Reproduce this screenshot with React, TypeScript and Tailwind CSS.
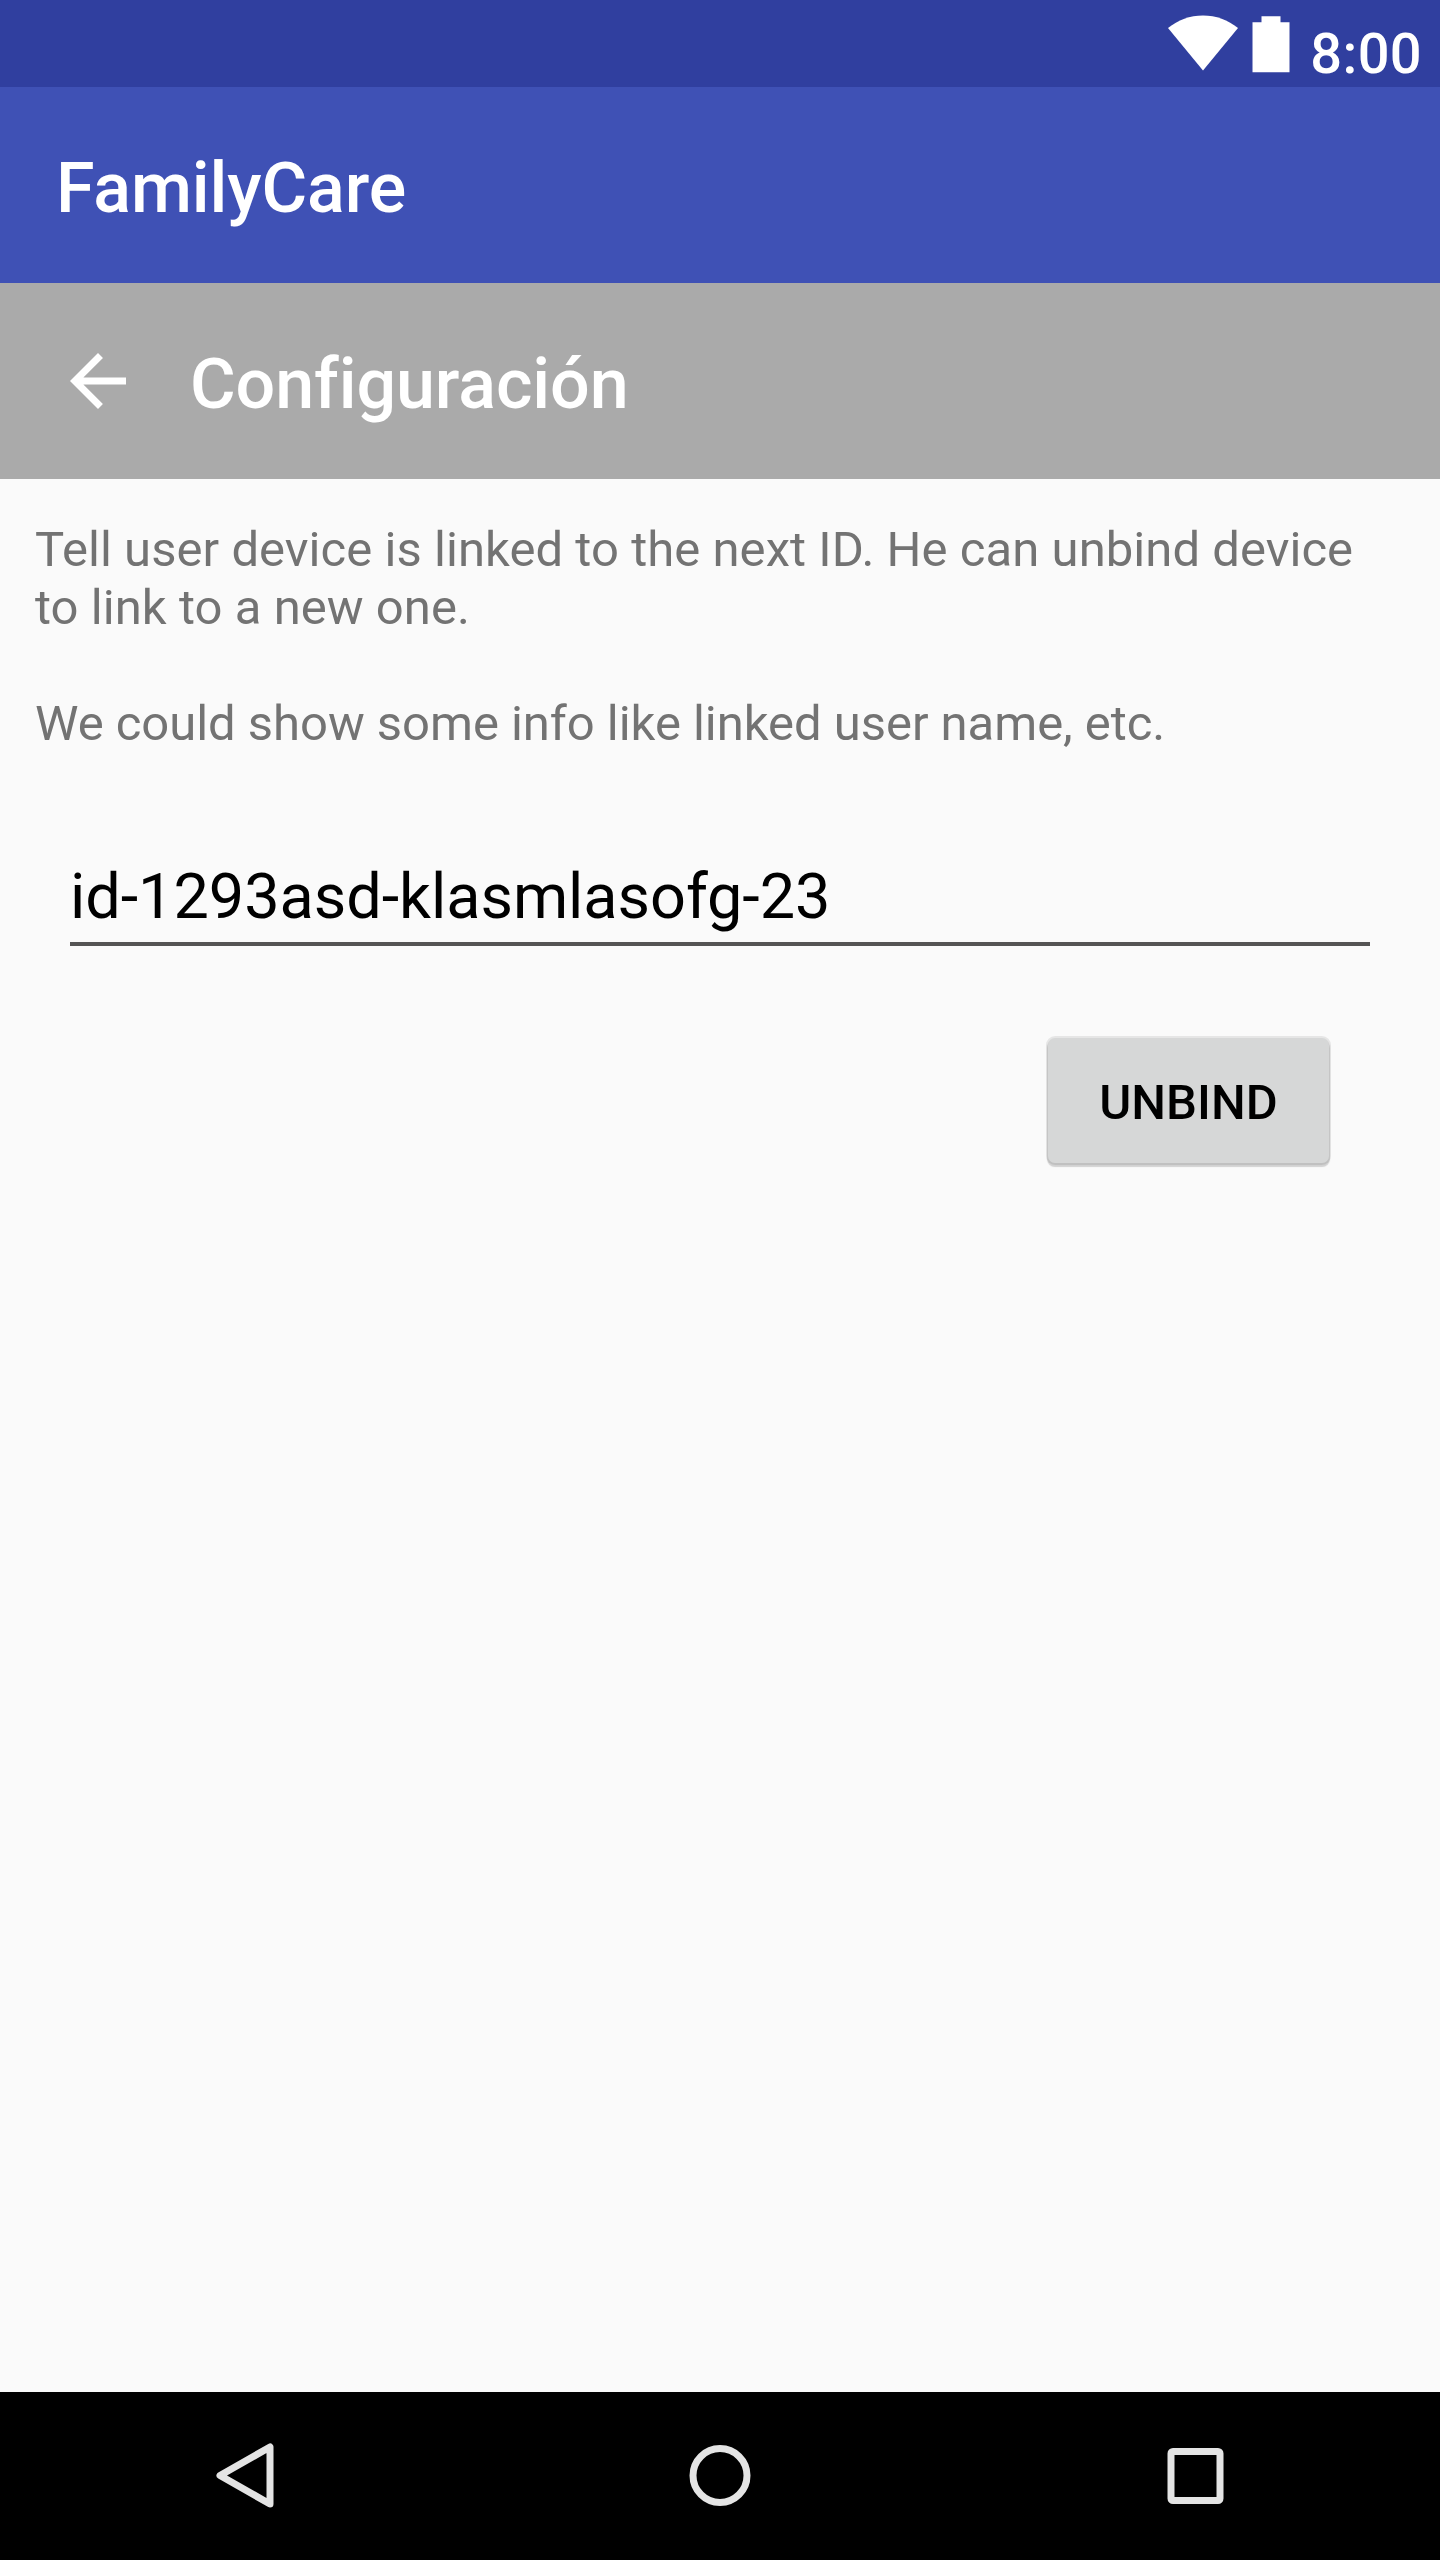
function StatusBar() {
  return (
    <div className="flex h-[87px] items-start justify-end bg-[#303F9F] pr-[18px] text-white">
      <svg className="mt-[15px] h-[56px] w-[70px]" viewBox="0 0 70 56" fill="#fff">
        <path d="M0 13C10 5 22 .5 35 .5S60 5 70 13L35 55.500Z" />
      </svg>
      <svg className="mt-[16px] ml-[14px] h-[57px] w-[38px]" viewBox="0 0 38 57" fill="#fff">
        <path d="M9.500 .3h19v6h9v50H.5v-50h9Z" />
      </svg>
      <span className="mt-[24px] ml-[20px] text-[56px] leading-[60px] font-medium tracking-[0.35px]">8:00</span>
    </div>
  );
}

function NavigationBar() {
  return (
    <nav className="flex h-[168px] items-center bg-black pl-[3px]">
      <svg className="ml-[200px] h-[84px] w-[84px]" viewBox="0 0 84 84" fill="none" stroke="#E4E4E4" strokeWidth="7" strokeLinejoin="round">
        <path d="M17 41.500 67 13v57Z" />
      </svg>
      <svg className="ml-[391px] h-[84px] w-[84px]" viewBox="0 0 84 84" fill="none" stroke="#E4E4E4" strokeWidth="7">
        <circle cx="42" cy="41.500" r="27" />
      </svg>
      <svg className="ml-[391px] h-[84px] w-[84px]" viewBox="0 0 84 84" fill="none" stroke="#E4E4E4" strokeWidth="7">
        <rect x="18" y="17.500" width="49" height="49" rx="2" />
      </svg>
    </nav>
  );
}

export default function App() {
  return (
    <div className="flex h-[2560px] w-[1440px] flex-col overflow-hidden bg-[#FAFAFA] font-[Roboto,sans-serif] [font-variant-ligatures:none]">
      <StatusBar />
      <header className="flex h-[196px] items-center bg-[#3F51B5] pt-[6px] pl-[56px]">
        <h1 className="text-[70px] leading-[82px] font-medium tracking-[-0.1px] text-white">FamilyCare</h1>
      </header>
      <div className="flex h-[196px] items-center bg-[#AAAAAA] pl-[56px] text-white">
        <button aria-label="Back">
          <svg className="h-[84px] w-[84px]" viewBox="0 0 24 24" fill="#fff">
            <path d="M20 11H7.830l5.590-5.590L12 4l-8 8 8 8 1.410-1.410L7.830 13H20z" />
          </svg>
        </button>
        <h2 className="mt-[6px] ml-[50px] text-[70px] leading-[82px] font-medium tracking-[-0.1px]">Configuración</h2>
      </div>
      <main className="flex flex-1 flex-col px-[35px] pt-[42px]">
        <div className="text-[49px] leading-[58px] whitespace-nowrap text-[#737373]">
          <p className="tracking-[0.05px]">
            Tell user device is linked to the next ID. He can unbind device
            <br />
            to link to a new one.
          </p>
          <p className="mt-[58px] tracking-[-0.04px]">We could show some info like linked user name, etc.</p>
        </div>
        <div className="mx-[35px] mt-[105px] h-[88px] border-b-[4px] border-[#555454]">
          <div className="text-[63px] leading-[77px] tracking-[-0.05px] whitespace-nowrap text-black">id-1293asd-klasmlasofg-23</div>
        </div>
        <button className="mt-[92px] mr-[76px] flex h-[125px] w-[281px] items-center justify-center self-end rounded-[7px] bg-[#D6D7D7] pt-[4px] text-[49px] leading-[58px] font-medium text-black shadow-[0_0_0_2px_rgba(0,0,0,0.08),0_3px_1px_1px_rgba(0,0,0,0.16)]">
          UNBIND
        </button>
      </main>
      <NavigationBar />
    </div>
  );
}
